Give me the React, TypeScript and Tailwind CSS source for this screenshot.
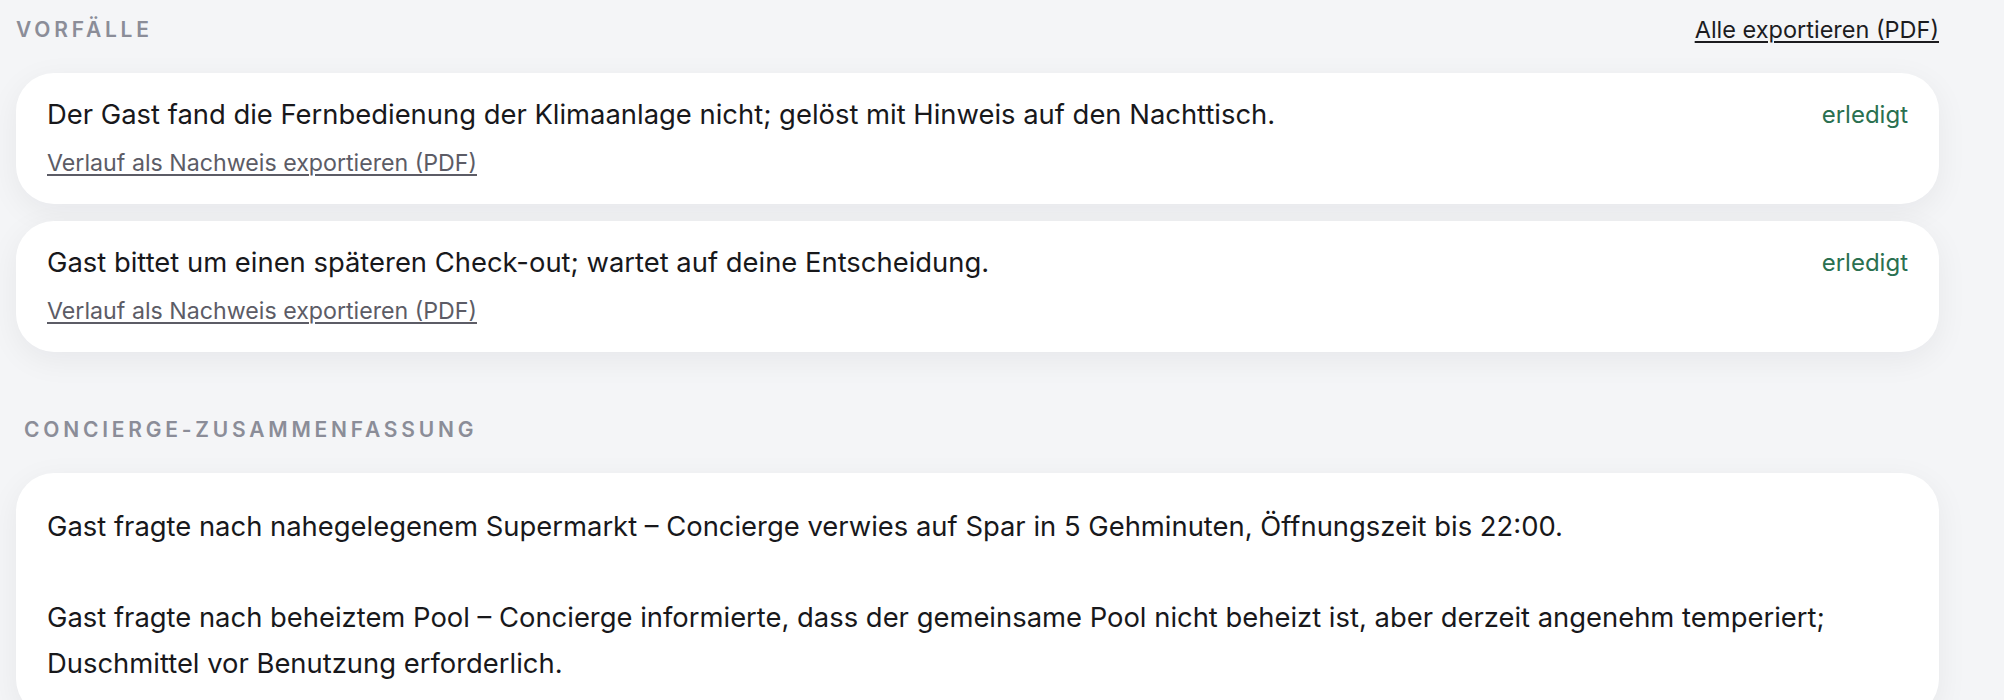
const incidents = [
  {
    id: 1,
    text: "Der Gast fand die Fernbedienung der Klimaanlage nicht; gelöst mit Hinweis auf den Nachttisch.",
    status: "erledigt",
  },
  {
    id: 2,
    text: "Gast bittet um einen späteren Check-out; wartet auf deine Entscheidung.",
    status: "erledigt",
  },
];

const summary =
  "Gast fragte nach nahegelegenem Supermarkt – Concierge verwies auf Spar in 5 Gehminuten, Öffnungszeit bis 22:00.\n\nGast fragte nach beheiztem Pool – Concierge informierte, dass der gemeinsame Pool nicht beheizt ist, aber derzeit angenehm temperiert; Duschmittel vor Benutzung erforderlich.";

function SectionLabel({ children, className }: { children: string; className?: string }) {
  return (
    <h2
      className={`text-[21px] leading-[28px] font-semibold tracking-[0.18em] text-[#8b8d98] ${className || ""}`}
    >
      {children}
    </h2>
  );
}

function IncidentCard({ text, status }: { text: string; status: string }) {
  return (
    <div className="flex items-start justify-between gap-6 rounded-[38px] bg-white px-[31px] pt-[23px] pb-[26px] shadow-[0_8px_32px_rgba(15,23,42,0.06)]">
      <div>
        <p className="text-[27.4px] leading-[37px] text-[#18181b]">{text}</p>
        <a
          href="#"
          className="mt-[15px] block text-[23.2px] leading-[30px] text-[#5c5c66] underline decoration-[1.5px] underline-offset-[3px]"
        >
          Verlauf als Nachweis exportieren (PDF)
        </a>
      </div>
      <span className="text-[24px] leading-[37px] text-[#2a7050]">{status}</span>
    </div>
  );
}

export default function App() {
  return (
    <div className="min-h-screen bg-[#f4f5f7] pt-[15px] pr-[65px] pl-4 font-['Inter',sans-serif]">
      <section>
        <div className="flex items-center justify-between">
          <SectionLabel>VORFÄLLE</SectionLabel>
          <a
            href="#"
            className="text-[23.5px] leading-[30px] text-[#1c1c1f] underline decoration-[1.5px] underline-offset-[3px]"
          >
            Alle exportieren (PDF)
          </a>
        </div>
        <div className="mt-[28px] flex flex-col gap-[17px]">
          {incidents.map((i) => (
            <IncidentCard key={i.id} text={i.text} status={i.status} />
          ))}
        </div>
      </section>

      <section className="mt-[64px]">
        <SectionLabel className="pl-2">CONCIERGE-ZUSAMMENFASSUNG</SectionLabel>
        <div className="mt-[29px] rounded-[38px] bg-white px-[31px] py-[31px] text-[27.4px] leading-[45.5px] whitespace-pre-line text-[#18181b] shadow-[0_8px_32px_rgba(15,23,42,0.06)]">
          {summary}
        </div>
      </section>
    </div>
  );
}
